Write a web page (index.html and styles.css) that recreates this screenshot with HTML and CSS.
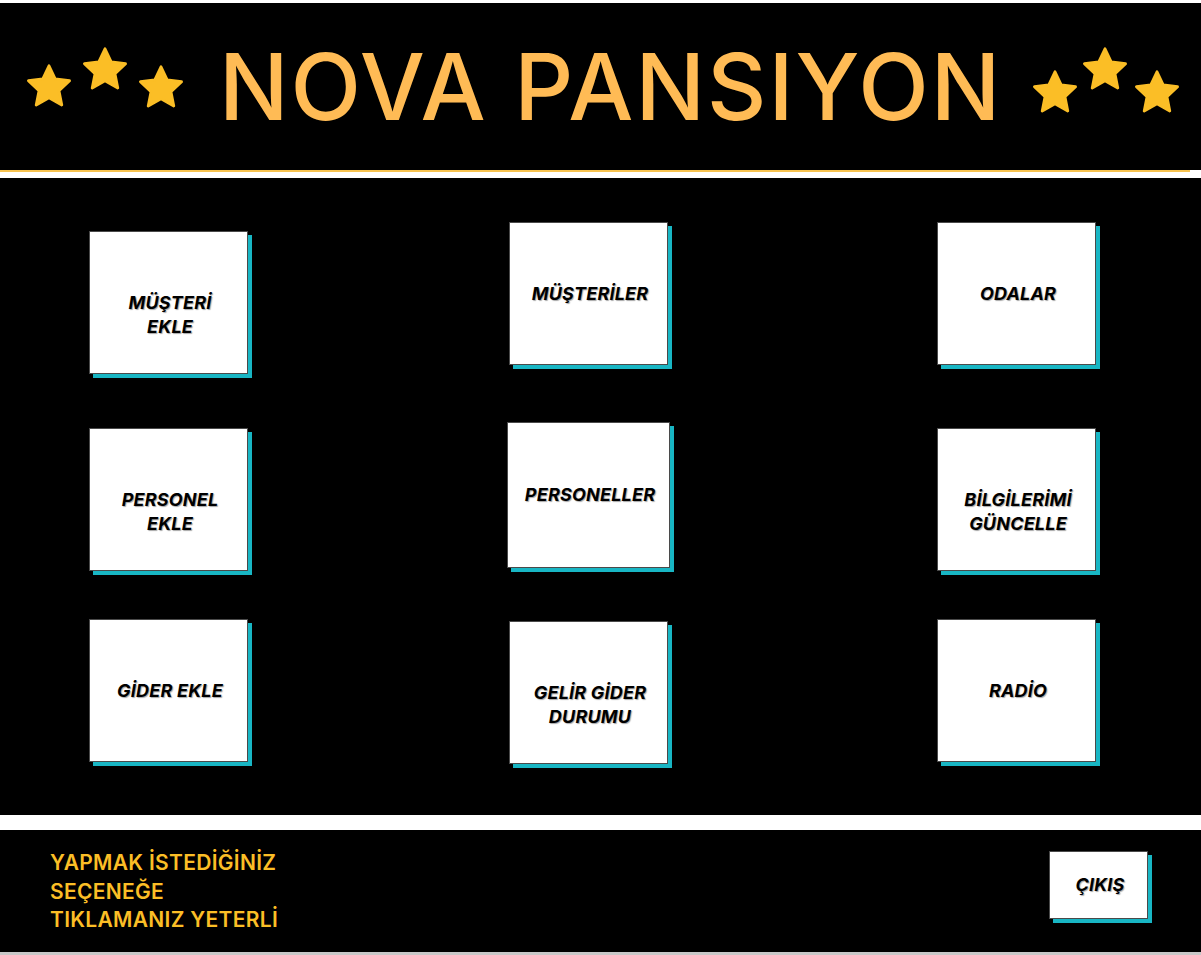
FILE: index.html
```html
<!DOCTYPE html>
<html lang="tr">
<head>
    <meta charset="UTF-8">
    <meta name="viewport" content="width=device-width, initial-scale=1.0">
    <title>Nova Pansiyon</title>
    <link rel="stylesheet" href="styles.css">
</head>
<body>
    <header class="top">
        <div class="stars left">
            <svg class="star s1" viewBox="0 0 24 24"><path d="M12 2.2l2.9 6.1 6.6.8-4.9 4.6 1.3 6.6L12 17l-5.9 3.3 1.3-6.6-4.9-4.6 6.6-.8z"/></svg>
            <svg class="star s2" viewBox="0 0 24 24"><path d="M12 2.2l2.9 6.1 6.6.8-4.9 4.6 1.3 6.6L12 17l-5.9 3.3 1.3-6.6-4.9-4.6 6.6-.8z"/></svg>
            <svg class="star s3" viewBox="0 0 24 24"><path d="M12 2.2l2.9 6.1 6.6.8-4.9 4.6 1.3 6.6L12 17l-5.9 3.3 1.3-6.6-4.9-4.6 6.6-.8z"/></svg>
        </div>
        <h1 class="title">NOVA PANSIYON</h1>
        <div class="stars right">
            <svg class="star s1" viewBox="0 0 24 24"><path d="M12 2.2l2.9 6.1 6.6.8-4.9 4.6 1.3 6.6L12 17l-5.9 3.3 1.3-6.6-4.9-4.6 6.6-.8z"/></svg>
            <svg class="star s2" viewBox="0 0 24 24"><path d="M12 2.2l2.9 6.1 6.6.8-4.9 4.6 1.3 6.6L12 17l-5.9 3.3 1.3-6.6-4.9-4.6 6.6-.8z"/></svg>
            <svg class="star s3" viewBox="0 0 24 24"><path d="M12 2.2l2.9 6.1 6.6.8-4.9 4.6 1.3 6.6L12 17l-5.9 3.3 1.3-6.6-4.9-4.6 6.6-.8z"/></svg>
        </div>
    </header>
    <div class="rule"></div>

    <main class="menu">
        <a class="card down-9" href="#"><span class="label two">MÜŞTERİ<br>EKLE</span></a>
        <a class="card" href="#"><span class="label">MÜŞTERİLER</span></a>
        <a class="card" href="#"><span class="label">ODALAR</span></a>

        <a class="card down-6" href="#"><span class="label two">PERSONEL<br>EKLE</span></a>
        <a class="card big" href="#"><span class="label">PERSONELLER</span></a>
        <a class="card down-6" href="#"><span class="label two">BİLGİLERİMİ<br>GÜNCELLE</span></a>

        <a class="card" href="#"><span class="label">GİDER EKLE</span></a>
        <a class="card down-2" href="#"><span class="label two">GELİR GİDER<br>DURUMU</span></a>
        <a class="card" href="#"><span class="label">RADİO</span></a>
    </main>

    <footer class="bottom">
        <p class="hint">YAPMAK İSTEDİĞİNİZ<br>SEÇENEĞE<br>TIKLAMANIZ YETERLİ</p>
        <a class="card exit" href="#"><span class="label">ÇIKIŞ</span></a>
    </footer>
</body>
</html>
```

FILE: styles.css
```css
body {
    margin: 0;
    background-color: #ffffff;
    font-family: Inter, "Noto Sans", sans-serif;
    width: 1201px;
    height: 955px;
    overflow: hidden;
}
.top {
    margin-top: 3px;
    height: 167px;
    background-color: #000;
    display: flex;
    align-items: center;
    padding-left: 23px;
    box-sizing: border-box;
}
.stars {
    display: flex;
    flex-shrink: 0;
    align-self: stretch;
    align-items: flex-start;
}
.star {
    width: 52px;
    height: 52px;
    fill: #fbbe26;
    stroke: #fbbe26;
    stroke-width: 1.3;
    stroke-linejoin: round;
}
.left { gap: 4px; }
.left .s1 { margin-top: 58px; }
.left .s2 { margin-top: 41px; }
.left .s3 { margin-top: 59px; }
.right .s1 { margin-top: 64px; }
.right .s2 { margin-top: 41px; margin-left: -2px; }
.right .s3 { margin-top: 64px; margin-left: 0; }
.title {
    margin: 0 27px 0 32px;
    flex-shrink: 0;
    white-space: nowrap;
    font-family: Inter, sans-serif;
    font-weight: 500;
    font-size: 92px;
    letter-spacing: 2px;
    color: #ffbb55;
    line-height: 1;
    padding-top: 0;
}
.rule {
    width: 1190px;
    height: 2px;
    background-color: #f7c350;
    margin-bottom: 6px;
}
.menu {
    height: 637px;
    background-color: #000;
    box-sizing: border-box;
    padding: 44px 0 0 89px;
    display: grid;
    grid-template-columns: 420px 428px 159px;
    grid-template-rows: 200px 197px auto;
    align-items: start;
}
.card {
    width: 159px;
    height: 143px;
    box-sizing: border-box;
    background-color: #fff;
    border: 1px solid #4a4a4a;
    box-shadow: 4px 4px 0 #18b6c4;
    display: flex;
    align-items: center;
    justify-content: center;
    text-decoration: none;
    color: #000;
}
.card.big {
    width: 163px;
    height: 146px;
    margin-left: -2px;
}
.down-9 { margin-top: 9px; }
.down-6 { margin-top: 6px; }
.down-2 { margin-top: 2px; }
.label {
    font-weight: 700;
    font-style: italic;
    font-size: 18px;
    line-height: 24px;
    letter-spacing: 0.2px;
    text-align: center;
    padding-left: 3px;
    text-shadow: 1px 1px 1px rgba(0, 0, 0, 0.35);
}
.label.two {
    padding-top: 24px;
}
.bottom {
    margin-top: 15px;
    height: 122px;
    background-color: #000;
    border-bottom: 3px solid #c8c8c8;
    display: flex;
    justify-content: space-between;
    align-items: flex-start;
    padding: 0 53px 0 50px;
}
.hint {
    margin: 19px 0 0;
    font-family: Inter, sans-serif;
    font-weight: 600;
    font-size: 21px;
    line-height: 28.5px;
    letter-spacing: 0.3px;
    color: #fbbe26;
}
.card.exit {
    width: 99px;
    height: 68px;
    margin-top: 21px;
}
```
